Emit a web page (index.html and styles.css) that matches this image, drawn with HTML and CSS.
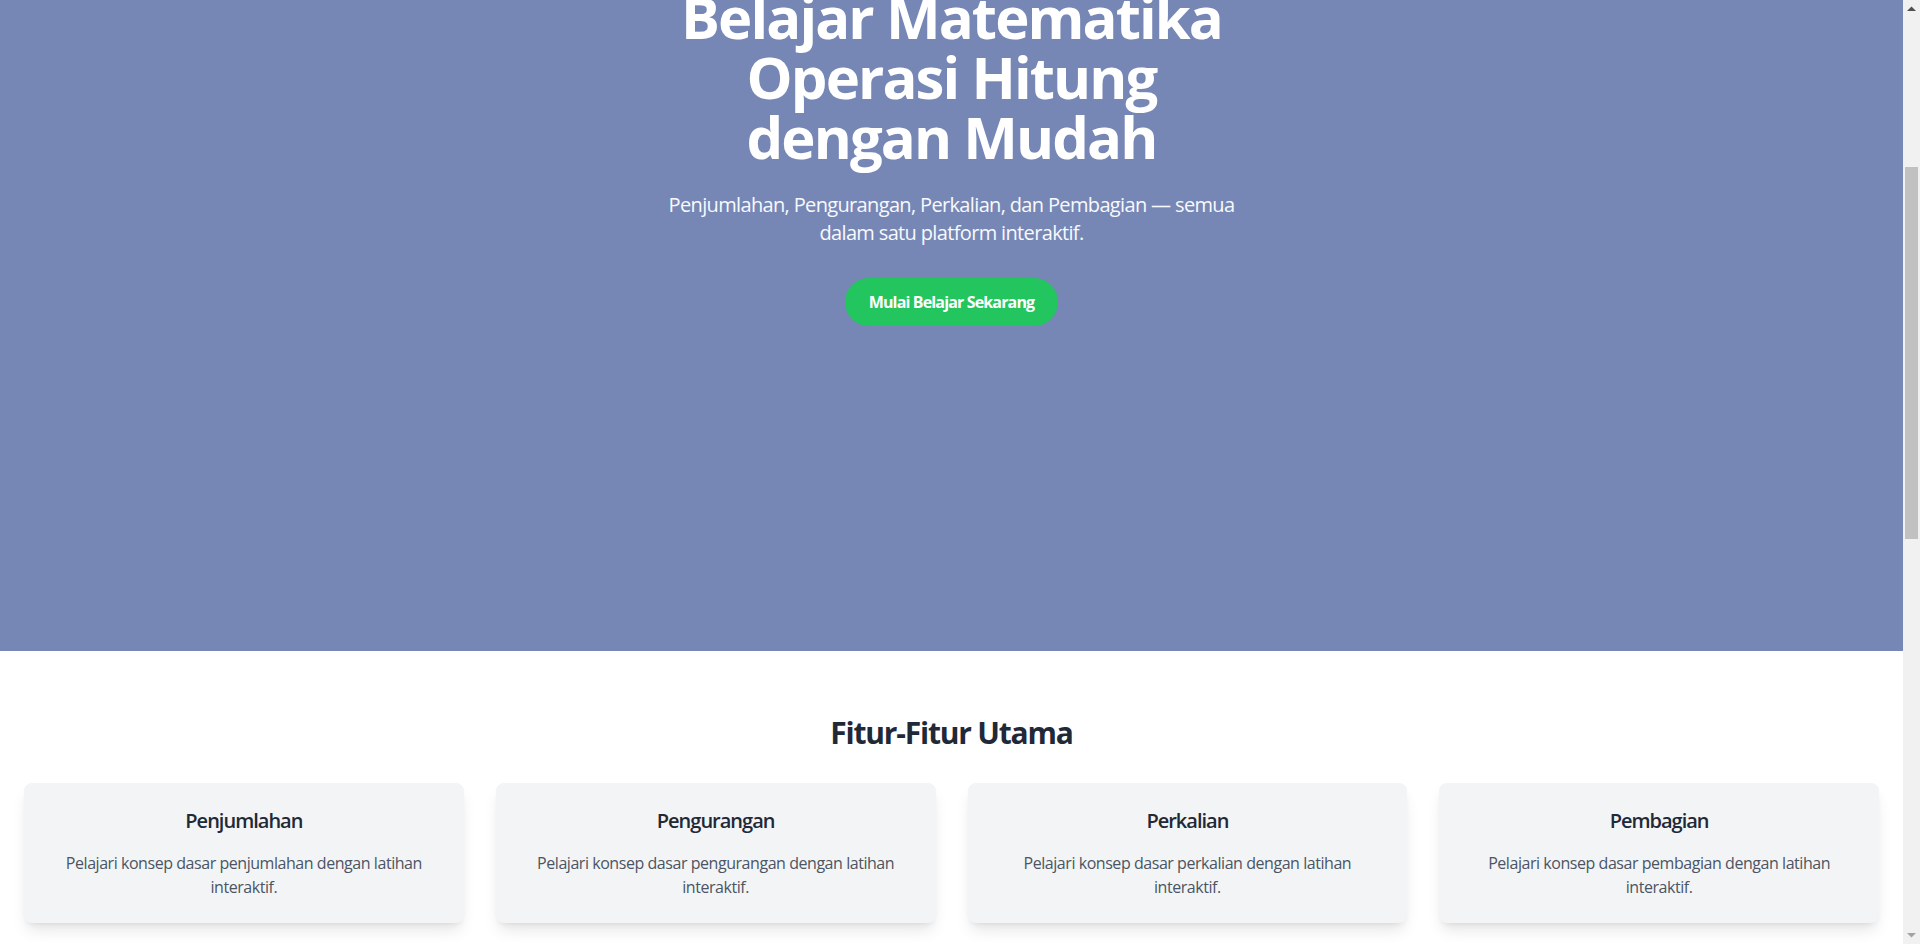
FILE: index.html
```html
<!DOCTYPE html>
<html lang="id">
<head>
<meta charset="utf-8">
<title>Belajar Matematika Operasi Hitung</title>
<link rel="stylesheet" href="styles.css">
</head>
<body>
<div class="page">
  <section class="hero">
    <div class="hero-inner">
      <h1 class="hero-title">Belajar Matematika Operasi Hitung dengan Mudah</h1>
      <p class="hero-sub">Penjumlahan, Pengurangan, Perkalian, dan Pembagian — semua dalam satu platform interaktif.</p>
      <a class="btn-start" href="#fitur">Mulai Belajar Sekarang</a>
    </div>
  </section>

  <section class="features" id="fitur">
    <h2 class="section-title">Fitur-Fitur Utama</h2>
    <div class="feature-grid">
      <div class="card">
        <h3 class="card-title">Penjumlahan</h3>
        <p class="card-text">Pelajari konsep dasar penjumlahan dengan latihan interaktif.</p>
      </div>
      <div class="card">
        <h3 class="card-title">Pengurangan</h3>
        <p class="card-text">Pelajari konsep dasar pengurangan dengan latihan interaktif.</p>
      </div>
      <div class="card">
        <h3 class="card-title">Perkalian</h3>
        <p class="card-text">Pelajari konsep dasar perkalian dengan latihan interaktif.</p>
      </div>
      <div class="card">
        <h3 class="card-title">Pembagian</h3>
        <p class="card-text">Pelajari konsep dasar pembagian dengan latihan interaktif.</p>
      </div>
    </div>
  </section>
</div>
<div class="scrollbar" aria-hidden="true">
  <div class="sb-btn"><svg width="9" height="5" viewBox="0 0 9 5"><path d="M0 5 L4.5 0.5 L9 5 Z" fill="#505050"/></svg></div>
  <div class="sb-track"><div class="sb-thumb"></div></div>
  <div class="sb-btn"><svg width="9" height="5" viewBox="0 0 9 5"><path d="M0 0 L4.5 4.5 L9 0 Z" fill="#a3a3a3"/></svg></div>
</div>
<script src="script.js"></script>
</body>
</html>
```
FILE: styles.css
```css
html {
  scroll-behavior: auto;
}
* {
  box-sizing: border-box;
}
body {
  margin: 0;
  font-family: "Open Sans", "Noto Sans", "DejaVu Sans", sans-serif;
  color: #1f2937;
  background: #ffffff;
}
.page {
  min-height: 2309px;
  margin-right: 17px;
}
.hero {
  min-height: calc(100vh + 87px);
  padding: 89px 24px 48px;
  background: #7687b6;
  color: #ffffff;
  display: flex;
  align-items: center;
  justify-content: center;
  text-align: center;
}
.hero-inner {
  max-width: 576px;
  display: flex;
  flex-direction: column;
  align-items: center;
}
.hero-title {
  margin: 0 0 24px;
  font-size: 58px;
  line-height: 60px;
  font-weight: 700;
  letter-spacing: -1.9px;
}
.hero-sub {
  margin: 0 0 31px;
  font-size: 20px;
  line-height: 28px;
  letter-spacing: -0.65px;
  color: #f8f9fc;
}
.btn-start {
  display: inline-block;
  padding: 12px 24px;
  background: #22c55e;
  color: #ffffff;
  font-size: 16px;
  line-height: 24px;
  font-weight: 700;
  letter-spacing: -0.85px;
  text-decoration: none;
  border-radius: 9999px;
}
.features {
  padding: 64px 24px;
}
.section-title {
  margin: 0 0 32px;
  text-align: center;
  font-size: 30px;
  line-height: 36px;
  font-weight: 700;
  letter-spacing: -1.2px;
  color: #1f2937;
}
.feature-grid {
  display: grid;
  grid-template-columns: repeat(4, 1fr);
  gap: 32px;
}
.card {
  background: #f3f4f6;
  border-radius: 8px;
  padding: 24px;
  text-align: center;
  box-shadow: 0 10px 15px -3px rgba(0, 0, 0, 0.1), 0 4px 6px -4px rgba(0, 0, 0, 0.1);
}
.card-title {
  margin: 0 0 16px;
  font-size: 20px;
  line-height: 28px;
  font-weight: 600;
  letter-spacing: -1px;
  color: #1f2937;
}
.card-text {
  margin: 0;
  font-size: 16px;
  line-height: 24px;
  letter-spacing: -0.45px;
  color: #4b5563;
}

/* browser scrollbar */
.scrollbar {
  position: fixed;
  top: 0;
  right: 0;
  width: 17px;
  height: 100vh;
  background: #f1f1f1;
  display: flex;
  flex-direction: column;
}
.sb-btn {
  height: 17px;
  display: flex;
  align-items: center;
  justify-content: center;
  flex: none;
}
.sb-track {
  flex: 1;
  padding: 150px 2px 0;
}
.sb-thumb {
  height: 372px;
  background: #c1c1c1;
}
```
FILE: script.js
```js
(function () {
  if ('scrollRestoration' in history) {
    history.scrollRestoration = 'manual';
  }
  function go() {
    window.scrollTo(0, 380);
  }
  go();
  window.addEventListener('load', go);
})();
```
